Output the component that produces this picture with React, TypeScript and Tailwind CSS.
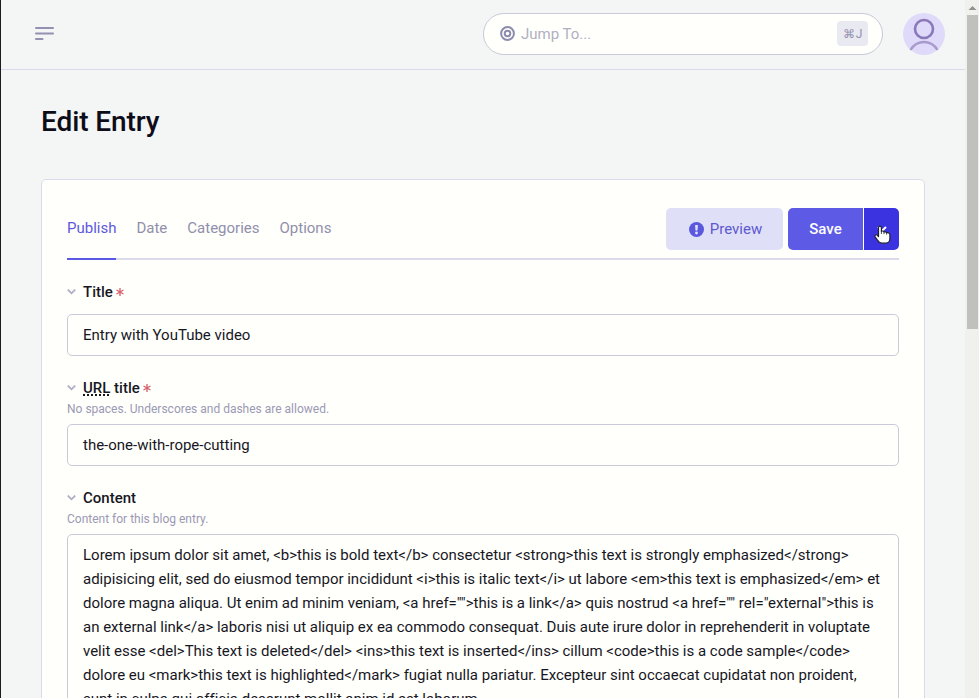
import type { ReactNode } from "react";

const tabs = ["Publish", "Date", "Categories", "Options"];

const contentLines = [
  "Lorem ipsum dolor sit amet, <b>this is bold text</b> consectetur <strong>this text is strongly emphasized</strong>",
  "adipisicing elit, sed do eiusmod tempor incididunt <i>this is italic text</i> ut labore <em>this text is emphasized</em> et",
  'dolore magna aliqua. Ut enim ad minim veniam, <a href="">this is a link</a> quis nostrud <a href="" rel="external">this is',
  "an external link</a> laboris nisi ut aliquip ex ea commodo consequat. Duis aute irure dolor in reprehenderit in voluptate",
  "velit esse <del>This text is deleted</del> <ins>this text is inserted</ins> cillum <code>this is a code sample</code>",
  "dolore eu <mark>this text is highlighted</mark> fugiat nulla pariatur. Excepteur sint occaecat cupidatat non proident,",
  "sunt in culpa qui officia deserunt mollit anim id est laborum.",
];

function Chevron() {
  return (
    <svg className="h-[6px] w-[9px] shrink-0" viewBox="0 0 9 6" fill="none">
      <path d="M0.8 0.6 L4.5 4.3 L8.2 0.6" stroke="#adadc4" strokeWidth="1.8" />
    </svg>
  );
}

function FieldLabel({ children, required }: { children: ReactNode; required?: boolean }) {
  return (
    <div className="flex h-5 items-center text-[15px] leading-5 font-medium text-[#17171f]">
      <Chevron />
      <span className="ml-[7px]">{children}</span>
      {required && (
        <svg className="-mt-px ml-[3px] size-2" viewBox="0 0 8 8" stroke="#d4606a" strokeWidth="1.3">
          <path d="M4 0V8M0.5 2L7.5 6M7.5 2L0.5 6" />
        </svg>
      )}
    </div>
  );
}

function Help({ children }: { children: ReactNode }) {
  return <p className="mt-px h-5 text-[12px] leading-5 text-[#9b99b4]">{children}</p>;
}

function TextField({ value }: { value: string }) {
  return (
    <div className="flex h-[42px] items-center rounded-[5px] border border-[#c9c9d9] px-[15px] text-[15px] text-[#17171f]">
      {value}
    </div>
  );
}

function Header() {
  return (
    <header className="flex h-[70px] shrink-0 items-center border-b border-[#d9d9e9] pr-5 pb-[2px] pl-[34px]">
      <svg className="h-[13px] w-[19px]" viewBox="0 0 19 13" stroke="#9391b1" strokeWidth="1.8" strokeLinecap="round">
        <path d="M0.9 1H18.1M0.9 6.5H18.1M0.9 12H7.6" />
      </svg>
      <div className="ml-auto flex h-[42px] w-[400px] items-center rounded-full border border-[#c9c9d9] bg-[#fffffc] pr-[14px] pl-4">
        <svg className="size-[15px]" viewBox="0 0 15 15" fill="none" stroke="#8e8cae" strokeWidth="2">
          <circle cx="7.5" cy="7.5" r="6.4" />
          <circle cx="7.5" cy="7.5" r="2.8" />
        </svg>
        <span className="mt-[2px] ml-[6px] text-[15px] text-[#b1b0c2]">Jump To...</span>
        <div className="ml-auto flex h-[25px] w-[31px] items-center justify-center gap-px rounded-[4px] bg-[#e9e9f1] text-[12px] text-[#9391b1]">
          <span>⌘</span>
          <span>J</span>
        </div>
      </div>
      <svg className="ml-5 size-[42px]" viewBox="0 0 42 42" fill="none">
        <circle cx="21" cy="21" r="21" fill="#dfdafa" />
        <circle cx="21" cy="16" r="9" stroke="#8a78b8" strokeWidth="2.6" />
        <path d="M7.5 37C10.5 32 15.2 29 21 29S31.5 32 34.5 37" stroke="#a99acd" strokeWidth="2.4" />
      </svg>
    </header>
  );
}

function Cursor() {
  return (
    <svg className="absolute top-[17px] left-[10px] h-[20px] w-[17px]" viewBox="0 0 17 20">
      <path
        d="M4.5 2.7C4.5 0.7 7.4 0.7 7.4 2.7V6.4C8.1 5.7 9.7 5.9 10 7.1C10.8 6.5 12.3 6.7 12.6 7.9C13.6 7.4 15.9 7.9 15.9 9.8V13.5C15.9 15.8 14.4 18.2 12 18.2H8C5.8 18.2 4.6 17 3.4 15L1 11.6C0.3 10.2 2.2 9.2 3.1 10.2L4.5 11.6Z"
        fill="#fff"
        stroke="#202030"
        strokeWidth="1.2"
        strokeLinejoin="round"
      />
      <path d="M7.4 6.4V9M10 7.2V9.2M12.6 8V9.6" stroke="#202030" strokeWidth="0.8" />
    </svg>
  );
}

function Toolbar() {
  return (
    <div className="flex h-[52px] items-start border-b-2 border-[#dadaea]">
      <nav className="flex gap-5">
        {tabs.map((tab, i) => (
          <span
            key={tab}
            className={
              i === 0
                ? "h-[52px] border-b-2 border-[#5b58e5] text-[15px] leading-[40px] text-[#5d59dc]"
                : "h-[52px] text-[15px] leading-[40px] text-[#918fab]"
            }
          >
            {tab}
          </span>
        ))}
      </nav>
      <div className="ml-auto flex h-[42px] text-[15px]">
        <div className="flex w-[117px] items-center justify-center rounded-[5px] bg-[#dfdff7] pl-[2px] text-[#5d59cf]">
          <svg className="mr-[6px] size-[15px]" viewBox="0 0 15 15">
            <circle cx="7.5" cy="7.5" r="7.5" fill="#5b58e0" />
            <path d="M6.1 3H8.9L8.5 8.6H6.5Z" fill="#e4e4fa" />
            <circle cx="7.5" cy="11" r="1.4" fill="#e4e4fa" />
          </svg>
          Preview
        </div>
        <div className="ml-[5px] flex w-[75px] items-center justify-center rounded-l-[5px] bg-[#5d5ae6] font-medium text-white">
          Save
        </div>
        <div className="relative ml-px flex w-[35px] items-center justify-center rounded-r-[5px] bg-[#3c33e0]">
          <svg className="h-[6px] w-[10px]" viewBox="0 0 10 6" fill="none">
            <path d="M1 1L5 4.8L9 1" stroke="#fff" strokeWidth="2" />
          </svg>
          <Cursor />
        </div>
      </div>
    </div>
  );
}

export default function App() {
  return (
    <div className="flex h-[698px] w-[979px] overflow-hidden bg-[#f4f5f5] font-['Roboto',sans-serif]">
      <div className="flex min-w-0 flex-1 flex-col border-l border-[#1c1c1f]">
        <Header />
        <main className="px-10">
          <h1 className="mt-8 h-10 text-[28px] leading-10 font-medium tracking-[-0.1px] text-[#0d0d19]">Edit Entry</h1>
          <section className="mt-[37px] h-[700px] rounded-[5px] border border-[#dadaea] bg-[#fffffc] px-[25px] pt-7">
            <Toolbar />
            <div className="mt-[22px]">
              <FieldLabel required>Title</FieldLabel>
              <div className="mt-3">
                <TextField value="Entry with YouTube video" />
              </div>
            </div>
            <div className="mt-[22px]">
              <FieldLabel required>
                <span className="underline decoration-dotted decoration-2 underline-offset-1">URL</span> title
              </FieldLabel>
              <Help>No spaces. Underscores and dashes are allowed.</Help>
              <div className="mt-[5px]">
                <TextField value="the-one-with-rope-cutting" />
              </div>
            </div>
            <div className="mt-[22px]">
              <FieldLabel>Content</FieldLabel>
              <Help>Content for this blog entry.</Help>
              <div className="mt-[5px] h-[220px] rounded-[5px] border border-[#c9c9d9] px-[15px] pt-2 text-[15px] leading-6 tracking-[-0.004px] whitespace-pre text-[#17171f]">
                {contentLines.map((line) => (
                  <div key={line}>{line}</div>
                ))}
              </div>
            </div>
          </section>
        </main>
      </div>
      <div className="flex w-[14px] shrink-0 flex-col bg-[#f0f0ed] pr-px pl-[2px]">
        <svg className="h-[15px] w-[11px] shrink-0" viewBox="0 0 11 15">
          <path d="M1.5 10L5.5 6L9.5 10Z" fill="#92928f" />
        </svg>
        <div className="h-[314px] bg-[#c0c0bc]" />
      </div>
    </div>
  );
}
